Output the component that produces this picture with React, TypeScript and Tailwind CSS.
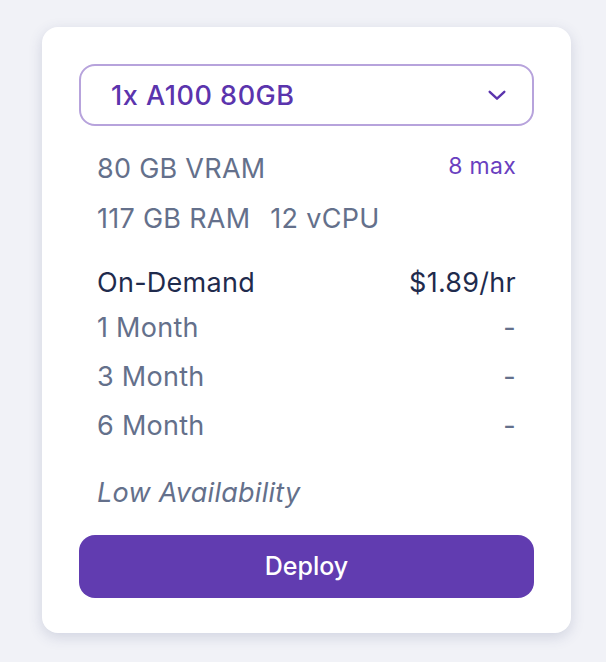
import React from "react";

export default function App() {
  const months = ["1 Month", "3 Month", "6 Month"];
  return (
    <div className="min-h-[662px] w-[606px] bg-[#f1f2f7] pt-[27px] pl-[42px] font-['Inter','Noto_Sans',sans-serif]">
      <div className="w-[529px] h-[606px] bg-white rounded-[16px] shadow-[0_4px_14px_rgba(60,70,120,0.18)] px-[37px] pt-[37px]">
        <div className="h-[62px] rounded-[16px] border-2 border-[#b7a3dc] flex items-center justify-between pl-[30px] pr-[24px]">
          <span className="text-[27px] font-medium tracking-[0.02em] text-[#5b34ad] leading-none">1x A100 80GB</span>
          <svg width="22" height="22" viewBox="0 0 24 24" fill="none" stroke="#5b34ad" strokeWidth="2.6" strokeLinecap="round" strokeLinejoin="round">
            <path d="M4 8.5l8 7.5 8-7.5" />
          </svg>
        </div>
        <div className="mt-[18px] px-[18px] text-[27px] tracking-[0.01em] text-[#64708b]">
          <div className="h-[50px] flex items-center justify-between">
            <span>80 GB VRAM</span>
            <span className="text-[23px] text-[#6a3fc0] self-start mt-[5px]">8 max</span>
          </div>
          <div className="h-[50px] flex items-center gap-[20px]">
            <span>117 GB RAM</span>
            <span>12 vCPU</span>
          </div>
          <div className="mt-[18px] h-[42px] flex items-center justify-between text-[#1f2b4d]">
            <span>On-Demand</span>
            <span>$1.89/hr</span>
          </div>
          {months.map((m) => (
            <div key={m} className="h-[49px] flex items-center justify-between">
              <span>{m}</span>
              <span>-</span>
            </div>
          ))}
          <div className="mt-[20px] h-[44px] flex items-center italic">Low Availability</div>
        </div>
        <button className="mt-[20px] w-full h-[63px] rounded-[16px] bg-[#613cb0] text-white text-[25px] font-medium flex items-center justify-center">
          Deploy
        </button>
      </div>
    </div>
  );
}
